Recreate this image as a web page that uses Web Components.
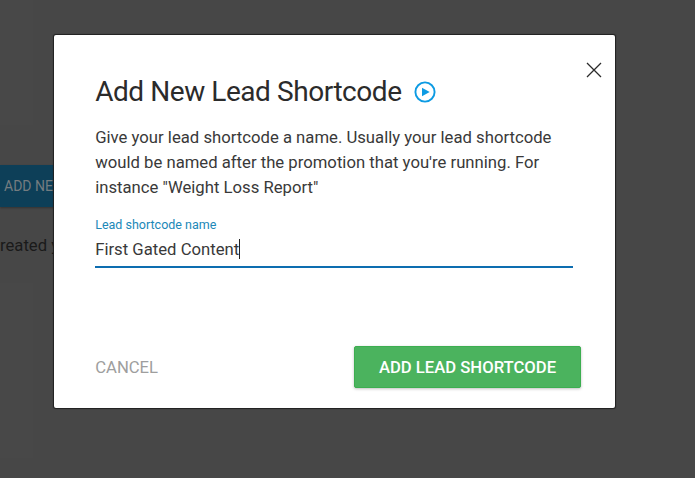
<!DOCTYPE html>
<html lang="en">
<head>
<meta charset="utf-8">
<title>Add New Lead Shortcode</title>
<style>
    html, body {
        margin: 0;
        height: 100%;
        overflow: hidden;
        background: #474747;
        font-family: Roboto, "Liberation Sans", sans-serif;
    }
</style>
</head>
<body>
<lead-page></lead-page>
<modal-overlay>
    <modal-card>
        <modal-title slot="title">Add New Lead Shortcode</modal-title>
        <span slot="text">Give your lead shortcode a name. Usually your lead shortcode would be named after the promotion that you're running. For instance "Weight Loss Report"</span>
        <text-field label="Lead shortcode name" value="First Gated Content"></text-field>
        <modal-button slot="footer" type="flat">CANCEL</modal-button>
        <modal-button slot="footer" type="green">ADD LEAD SHORTCODE</modal-button>
    </modal-card>
</modal-overlay>

<script>
// Dimmed dashboard that stays behind the dialog
class LeadPage extends HTMLElement {
    constructor() {
        super();
        this.attachShadow({ mode: 'open' });
        this.shadowRoot.innerHTML = `
            <style>
                :host {
                    display: flex;
                    flex-direction: column;
                    height: 478px;
                    overflow: hidden;
                    white-space: nowrap;
                }
                .panel {
                    width: 33px;
                    background: #484848;
                }
                .top { height: 125px; }
                .bottom { height: 175px; margin-top: 25px; }
                .add {
                    box-sizing: border-box;
                    width: 140px;
                    height: 42px;
                    margin-top: 40px;
                    padding-left: 4px;
                    background: #0d3f58;
                    box-shadow: 0 1px 2px rgba(0, 0, 0, 0.3);
                    color: #747c80;
                    font-size: 14px;
                    line-height: 42px;
                }
                p {
                    margin: 25px 0 0;
                    height: 26px;
                    color: #1a1a1a;
                    font-size: 16.67px;
                    line-height: 27px;
                }
            </style>
            <div class="panel top"></div>
            <div class="add">ADD NEW</div>
            <p>reated y</p>
            <div class="panel bottom"></div>
        `;
    }
}

class ModalOverlay extends HTMLElement {
    constructor() {
        super();
        this.attachShadow({ mode: 'open' });
        this.shadowRoot.innerHTML = `
            <style>
                :host {
                    position: absolute;
                    inset: 0;
                    display: block;
                    box-sizing: border-box;
                    padding: 35px 80px 0 54px;
                }
            </style>
            <slot></slot>
        `;
    }
}

class ModalCard extends HTMLElement {
    constructor() {
        super();
        this.attachShadow({ mode: 'open' });
        this.shadowRoot.innerHTML = `
            <style>
                :host {
                    position: relative;
                    display: flex;
                    flex-direction: column;
                    box-sizing: border-box;
                    height: 373px;
                    padding: 38px 34px 20px 41.2px;
                    border-radius: 2px;
                    background: #fff;
                    box-shadow: 0 0 1px 1px #202020;
                    color: #393939;
                }
                .close {
                    position: absolute;
                    top: 27px;
                    right: 13px;
                    width: 16px;
                    height: 16px;
                }
                .close path {
                    fill: none;
                    stroke: #2b2b2b;
                    stroke-width: 1.3;
                }
                .text {
                    margin: 14px 0 0;
                    width: 478px;
                    height: 75px;
                    font-size: 16.7px;
                    line-height: 25px;
                }
                .body {
                    margin-top: 17px;
                    width: 478px;
                }
                .footer {
                    display: flex;
                    justify-content: space-between;
                    margin-top: auto;
                }
            </style>
            <svg class="close" viewBox="0 0 16 16"><path d="M1 1 15 15M15 1 1 15"/></svg>
            <slot name="title"></slot>
            <div class="text"><slot name="text"></slot></div>
            <div class="body"><slot></slot></div>
            <div class="footer"><slot name="footer"></slot></div>
        `;
    }
}

class ModalTitle extends HTMLElement {
    constructor() {
        super();
        this.attachShadow({ mode: 'open' });
        this.shadowRoot.innerHTML = `
            <style>
                :host {
                    display: flex;
                    align-items: center;
                    gap: 12.7px;
                    height: 38px;
                    color: #2b2b2b;
                    font-size: 28px;
                    letter-spacing: -0.44px;
                    line-height: 38px;
                    white-space: nowrap;
                }
                svg {
                    flex: none;
                    width: 22px;
                    height: 22px;
                }
            </style>
            <span><slot></slot></span>
            <svg viewBox="0 0 22 22">
                <circle cx="11" cy="11" r="9.6" fill="none" stroke="#0d9be3" stroke-width="1.9"/>
                <path d="M8 6.7 15.7 11 8 15.3z" fill="#0d9be3"/>
            </svg>
        `;
    }
}

class TextField extends HTMLElement {
    constructor() {
        super();
        this.attachShadow({ mode: 'open' });
        this.shadowRoot.innerHTML = `
            <style>
                :host { display: block; }
                label {
                    display: block;
                    color: #2088b8;
                    font-size: 12.5px;
                    line-height: 16px;
                }
                .value {
                    display: flex;
                    align-items: center;
                    height: 33px;
                    border-bottom: 2px solid #0d6db0;
                    font-size: 16.7px;
                }
                .caret {
                    width: 1px;
                    height: 20px;
                    margin-bottom: 2px;
                    background: #222;
                }
            </style>
            <label>${this.getAttribute('label')}</label>
            <div class="value"><span>${this.getAttribute('value')}</span><i class="caret"></i></div>
        `;
    }
}

class ModalButton extends HTMLElement {
    constructor() {
        super();
        this.attachShadow({ mode: 'open' });
        this.shadowRoot.innerHTML = `
            <style>
                :host {
                    display: block;
                    height: 42px;
                    font-size: 16.67px;
                    line-height: 43px;
                    white-space: nowrap;
                }
                :host([type="flat"]) { color: #9e9e9e; }
                :host([type="green"]) {
                    box-sizing: border-box;
                    width: 227px;
                    border: 1px solid #3cae50;
                    border-radius: 2px;
                    background: #4bb35e;
                    box-shadow: 0 1px 3px rgba(0, 0, 0, 0.25);
                    color: #fff;
                    font-weight: 500;
                    line-height: 41px;
                    text-align: center;
                }
            </style>
            <slot></slot>
        `;
    }
}

customElements.define('lead-page', LeadPage);
customElements.define('modal-overlay', ModalOverlay);
customElements.define('modal-card', ModalCard);
customElements.define('modal-title', ModalTitle);
customElements.define('text-field', TextField);
customElements.define('modal-button', ModalButton);
</script>
</body>
</html>
